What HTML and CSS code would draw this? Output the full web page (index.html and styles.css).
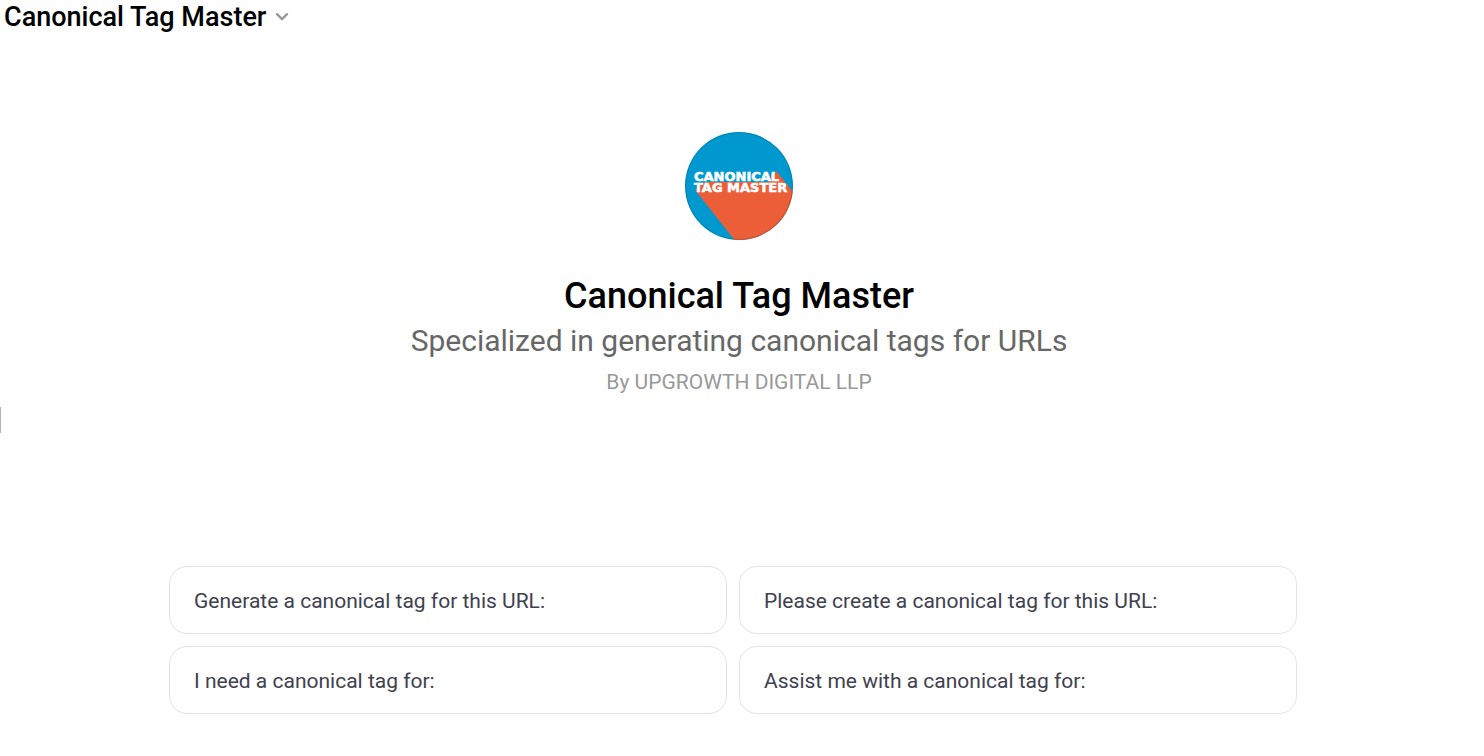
FILE: index.html
```
<!DOCTYPE html>
<html lang="en">
<head>
<meta charset="utf-8">
<meta name="viewport" content="width=device-width, initial-scale=1">
<title>Canonical Tag Master</title>
<link rel="stylesheet" href="styles.css">
</head>
<body>
<header class="topbar">
  <button class="model-switch" type="button">
    <span>Canonical Tag Master</span>
    <svg class="chevron" viewBox="0 0 16 16" width="16" height="16" aria-hidden="true"><path d="M3 5.2 8 10.2 13 5.2" fill="none" stroke="#999" stroke-width="2.4" stroke-linecap="round" stroke-linejoin="round"/></svg>
  </button>
</header>
<button class="side-handle" type="button" aria-label="Toggle sidebar"></button>
<main class="page">
  <section class="hero">
    <svg class="logo" viewBox="0 0 108 108" role="img" aria-label="Canonical Tag Master logo">
      <defs><clipPath id="disc"><circle cx="54" cy="54" r="54"/></clipPath></defs>
      <g clip-path="url(#disc)">
        <rect width="108" height="108" fill="#0099cf"/>
        <path d="M10 58 20 50H86V42L92 40 112 65V120H59Z" fill="#eb5e38"/>
      </g>
      <circle cx="54" cy="54" r="53.5" fill="none" stroke="#000" stroke-opacity=".15"/>
      <text class="logo-text" y="49" stroke="#fff" stroke-width=".6"><tspan x="9">CANONICAL</tspan><tspan x="9" dy="11">TAG MASTER</tspan></text>
    </svg>
    <h1 class="title">Canonical Tag Master</h1>
    <p class="subtitle">Specialized in generating canonical tags for URLs</p>
    <p class="author">By UPGROWTH DIGITAL LLP</p>
  </section>
  <section class="prompts">
    <button class="prompt" type="button">Generate a canonical tag for this URL:</button>
    <button class="prompt" type="button">Please create a canonical tag for this URL:</button>
    <button class="prompt" type="button">I need a canonical tag for:</button>
    <button class="prompt" type="button">Assist me with a canonical tag for:</button>
  </section>
</main>
</body>
</html>
```
FILE: styles.css
```
* { box-sizing: border-box; }
body {
  margin: 0;
  min-height: 100vh;
  background: #fff;
  color: #000;
  font-family: Roboto, "Liberation Sans", sans-serif;
  display: flex;
  flex-direction: column;
}
button {
  font: inherit;
  border: 0;
  background: none;
  cursor: pointer;
}
.model-switch {
  display: flex;
  align-items: center;
  gap: 8px;
  padding: 0 4px;
  font-size: 27px;
  font-weight: 500;
  line-height: 34px;
  color: #000;
}
.side-handle {
  position: absolute;
  left: 0;
  top: 407px;
  width: 1px;
  height: 26px;
  padding: 0;
  background: #b4b4b4;
}
.page {
  flex: 1;
  display: flex;
  flex-direction: column;
  justify-content: space-between;
  padding: 98px 0 42px;
}
.hero {
  display: flex;
  flex-direction: column;
  align-items: center;
  padding-right: 6px;
  text-align: center;
}
.logo {
  width: 108px;
  height: 108px;
}
.logo-text {
  font-family: "DejaVu Sans", sans-serif;
  font-size: 13px;
  font-weight: 700;
  fill: #fff;
}
.title {
  margin: 32px 0 0;
  font-size: 36px;
  font-weight: 500;
  line-height: 48px;
}
.subtitle {
  margin: 0;
  font-size: 30px;
  line-height: 42px;
  color: #676767;
}
.author {
  margin: 4px 0 0;
  font-size: 21px;
  line-height: 32px;
  color: #999;
}
.prompts {
  display: grid;
  grid-template-columns: 1fr 1fr;
  gap: 12px;
  padding: 0 187px 0 169px;
}
.prompt {
  min-height: 68px;
  padding: 18px 24px 16px;
  border: 1px solid #e3e3e3;
  border-radius: 18px;
  font-size: 21px;
  line-height: 32px;
  text-align: left;
  color: #40414f;
}
```
